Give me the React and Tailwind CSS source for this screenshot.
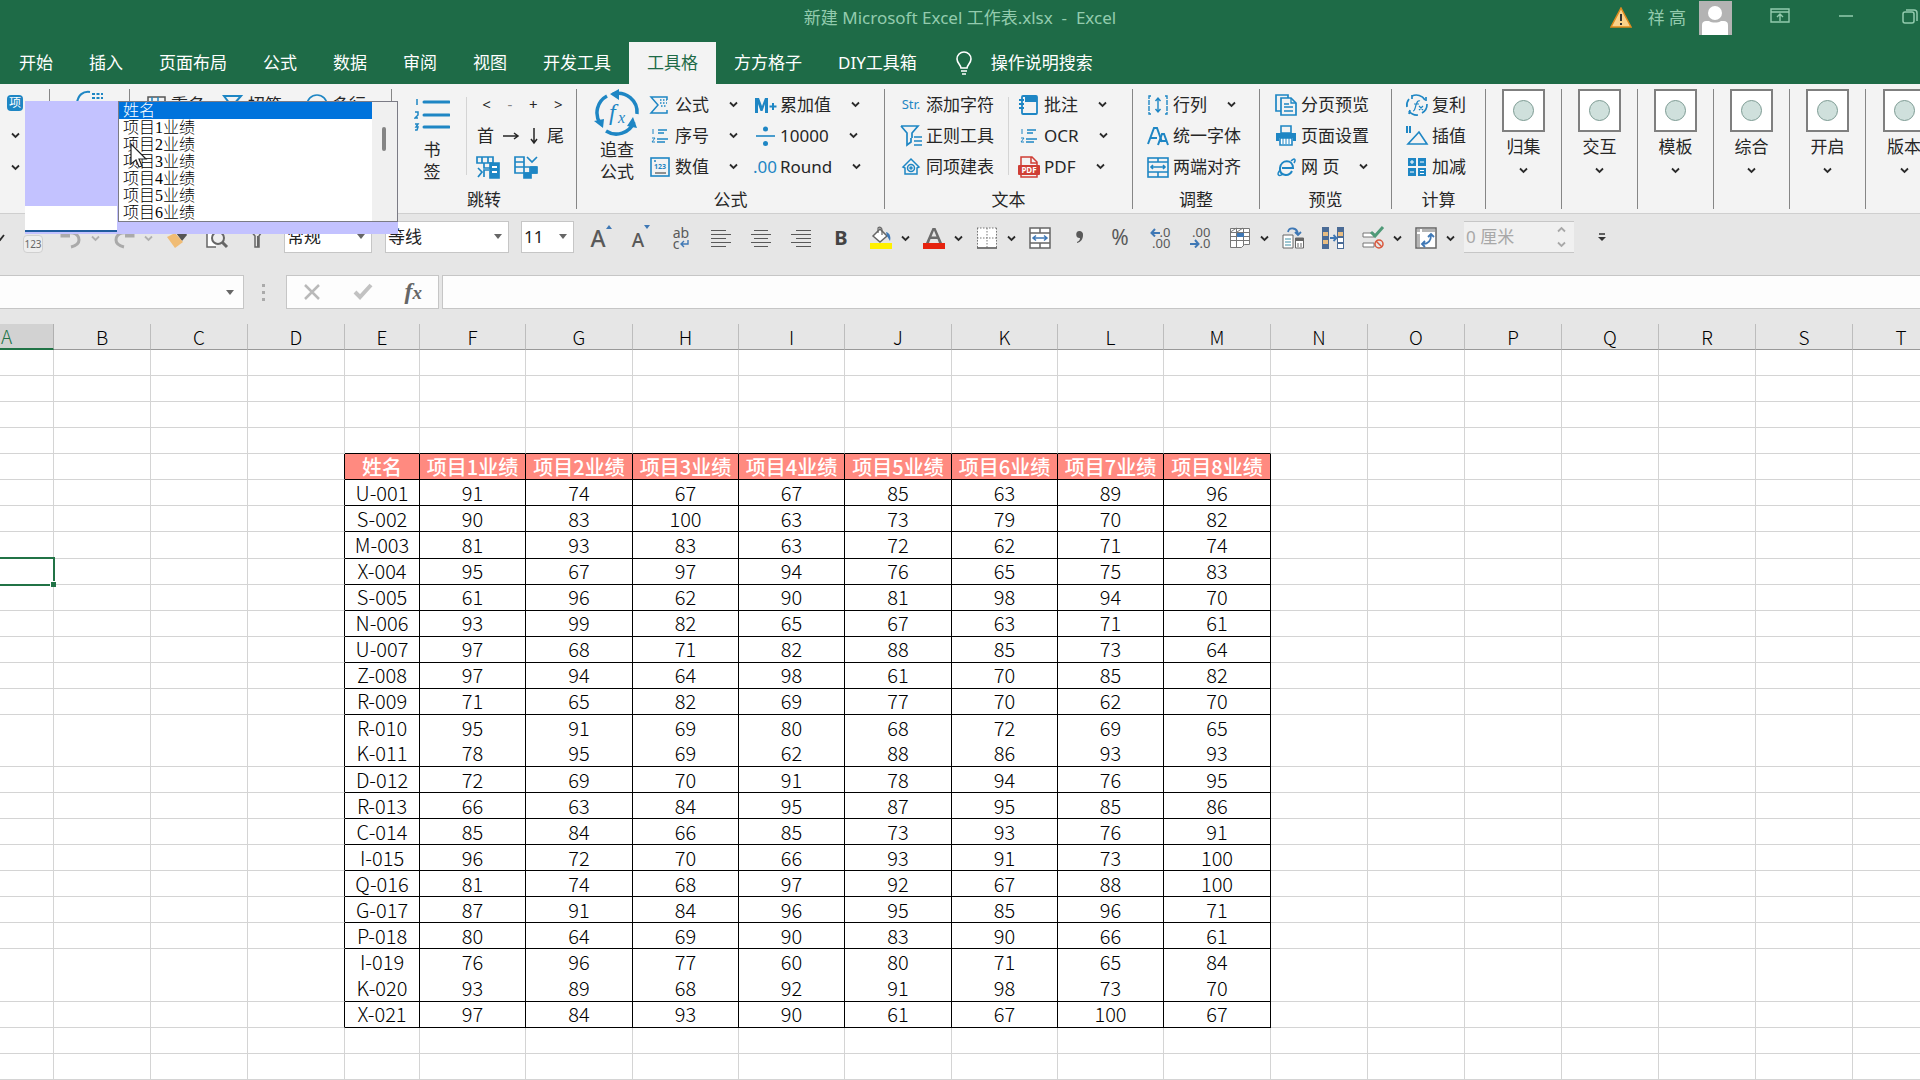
import React from "react";
import { clsx } from "clsx";

const BLUE = "#1e86c4";

const tabs = [
  "开始",
  "插入",
  "页面布局",
  "公式",
  "数据",
  "审阅",
  "视图",
  "开发工具",
  "工具格",
  "方方格子",
  "DIY工具箱",
];

const columns = [
  ["A", 54],
  ["B", 97],
  ["C", 97],
  ["D", 97],
  ["E", 75],
  ["F", 106],
  ["G", 107],
  ["H", 106],
  ["I", 106],
  ["J", 107],
  ["K", 106],
  ["L", 106],
  ["M", 107],
  ["N", 97],
  ["O", 97],
  ["P", 97],
  ["Q", 97],
  ["R", 97],
  ["S", 97],
  ["T", 97],
];

const fields = [
  "姓名",
  "项目1业绩",
  "项目2业绩",
  "项目3业绩",
  "项目4业绩",
  "项目5业绩",
  "项目6业绩",
  "项目7业绩",
  "项目8业绩",
];

const records = [
  ["U-001", 91, 74, 67, 67, 85, 63, 89, 96],
  ["S-002", 90, 83, 100, 63, 73, 79, 70, 82],
  ["M-003", 81, 93, 83, 63, 72, 62, 71, 74],
  ["X-004", 95, 67, 97, 94, 76, 65, 75, 83],
  ["S-005", 61, 96, 62, 90, 81, 98, 94, 70],
  ["N-006", 93, 99, 82, 65, 67, 63, 71, 61],
  ["U-007", 97, 68, 71, 82, 88, 85, 73, 64],
  ["Z-008", 97, 94, 64, 98, 61, 70, 85, 82],
  ["R-009", 71, 65, 82, 69, 77, 70, 62, 70],
  ["R-010", 95, 91, 69, 80, 68, 72, 69, 65],
  ["K-011", 78, 95, 69, 62, 88, 86, 93, 93],
  ["D-012", 72, 69, 70, 91, 78, 94, 76, 95],
  ["R-013", 66, 63, 84, 95, 87, 95, 85, 86],
  ["C-014", 85, 84, 66, 85, 73, 93, 76, 91],
  ["I-015", 96, 72, 70, 66, 93, 91, 73, 100],
  ["Q-016", 81, 74, 68, 97, 92, 67, 88, 100],
  ["G-017", 87, 91, 84, 96, 95, 85, 96, 71],
  ["P-018", 80, 64, 69, 90, 83, 90, 66, 61],
  ["I-019", 76, 96, 77, 60, 80, 71, 65, 84],
  ["K-020", 93, 89, 68, 92, 91, 98, 73, 70],
  ["X-021", 97, 84, 93, 90, 61, 67, 100, 67],
];

const FIRST_ROW = 4;
const FIRST_COL = 4;
const ROW_COUNT = 28;
const SELECTED_ROW = 8;
// rows drawn without a rule underneath
const OPEN_ROWS = [14, 23];

function Svg({ w = 24, h = 24, children, ...props }) {
  return (
    <svg
      width={w}
      height={h}
      viewBox={`0 0 ${w} ${h}`}
      fill="none"
      aria-hidden="true"
      className="shrink-0"
      {...props}
    >
      {children}
    </svg>
  );
}

function Chevron({ color = "#2b2b2b" }) {
  return (
    <Svg w={9} h={7}>
      <path d="M1 1.5l3.5 3.5L8 1.5" stroke={color} strokeWidth="1.8" />
    </Svg>
  );
}

/* ---------- ribbon icons ---------- */

const icons = {
  sigma: (
    <Svg stroke={BLUE} strokeWidth="1.5">
      <path d="M19 7V4H3l7 8-7 8h16v-3" />
      <path d="M12 7h7M12 10h7M13 13h6" strokeDasharray="1.5 1.5" />
    </Svg>
  ),
  list: (
    <Svg stroke={BLUE} strokeWidth="1.6">
      <path d="M10 6h9M10 9h6M9 15h11M9 18h8" />
      <path d="M5 5v5M4 14h3l-3 4h3" strokeWidth="1" />
    </Svg>
  ),
  number: (
    <Svg stroke={BLUE} strokeWidth="1.6">
      <rect x="3" y="3" width="18" height="18" />
      <path d="M6 6h2" />
      <path d="M7 18h11" stroke="#777" />
      <text x="6" y="14" fontSize="7" fontWeight="700" fill={BLUE} stroke="none">
        123
      </text>
    </Svg>
  ),
  mplus: (
    <Svg>
      <path d="M2 20V5h4l3 8 3-8h3v15h-3v-9l-2.500 7h-2L5 11v9z" fill={BLUE} />
      <path d="M16.500 13.500h7M20 10v7" stroke={BLUE} strokeWidth="2" />
    </Svg>
  ),
  divide: (
    <Svg>
      <path d="M3 12h19" stroke={BLUE} strokeWidth="1.600" />
      <circle cx="12.500" cy="5" r="2.500" fill={BLUE} />
      <circle cx="12.500" cy="19.500" r="2.500" fill={BLUE} />
    </Svg>
  ),
  funnel: (
    <Svg stroke={BLUE} strokeWidth="1.7">
      <path d="M2 2h17l-6 7v5M2 2l6 7v12l4-3v-4" />
      <path d="M15 13h8M15 17h8M15 21h8" />
    </Svg>
  ),
  home: (
    <Svg stroke={BLUE} strokeWidth="1.500">
      <path d="M4 12l8-8 8 8-2 1v6H6v-6z" />
      <circle cx="12" cy="13" r="3.500" />
      <circle cx="12" cy="13" r="1" />
    </Svg>
  ),
  note: (
    <Svg>
      <rect x="5" y="3" width="15" height="18" rx="1" stroke={BLUE} strokeWidth="1.800" />
      <path d="M8 3h12v6H8z" fill={BLUE} />
      <path d="M2 7h5M2 11h5M2 15h5" stroke={BLUE} strokeWidth="2" />
    </Svg>
  ),
  pdf: (
    <Svg>
      <path d="M4 11V2h11l5 5v4M4 19v3h16v-3M14 2v6h6" stroke="#cf3e35" strokeWidth="1.500" />
      <rect x="1" y="10" width="22" height="10" rx="1" fill="#cf3e35" />
      <text x="12" y="18" textAnchor="middle" fontSize="8" fontWeight="700" fill="#fff">
        PDF
      </text>
    </Svg>
  ),
  brackets: (
    <Svg stroke={BLUE} strokeWidth="1.400">
      <path d="M5 3H3v18h2M19 3h2v18h-2" strokeDasharray="5 1" />
      <path d="M12 5v14M9.500 8L12 5l2.500 3M9.500 16l2.500 3 2.500-3" />
    </Svg>
  ),
  fonts: (
    <Svg stroke={BLUE} strokeWidth="2">
      <path d="M2 20L8 4h3l5 14M5 14h6" />
      <path d="M12 21l4-11h2l4 11M14 17h6" />
    </Svg>
  ),
  justify: (
    <Svg stroke={BLUE} strokeWidth="1.600">
      <rect x="2" y="3" width="20" height="19" />
      <path d="M2 7h20M2 17h20M12 3v4M12 17v5M5 12h14M7 10l-2 2 2 2M17 10l2 2-2 2" />
    </Svg>
  ),
  pages: (
    <Svg stroke={BLUE} strokeWidth="1.700">
      <path d="M7 18H2V2h12v3" />
      <path d="M7 5h10l5 5v12H7z" />
      <path d="M17 5v5h5M10 11h5M10 14h9M10 18h9" strokeWidth="1.300" />
    </Svg>
  ),
  printer: (
    <Svg>
      <path d="M7 2h10v7H7z" stroke={BLUE} strokeWidth="1.600" />
      <path d="M2 9h20v8h-3v-3H5v3H2z" fill={BLUE} />
      <path d="M6 14h12v7H6z" stroke={BLUE} strokeWidth="1.600" fill="#fff" />
      <path d="M9 14v6M12 14v6M15 14v6" stroke={BLUE} />
    </Svg>
  ),
  web: (
    <Svg stroke={BLUE} strokeWidth="2">
      <path d="M8 13h11c0-9-12-9-13 0-1 8 9 9 12 3" />
      <path d="M17 6c4-4 5-1 3 2M6 15c-4 5-1 7 3 4" strokeWidth="1.500" />
    </Svg>
  ),
  compound: (
    <Svg stroke={BLUE} strokeWidth="1.700">
      <path d="M7 3a10 10 0 0 1 13 4M22 11a10 10 0 0 1-5 9M13 22a10 10 0 0 1-9-4M2 14A10 10 0 0 1 4 6" />
      <path d="M7 2v4M21 4v4M4 21l1-4" />
      <path d="M8 18c2 0 2-3 3-6s2-5 4-4M9 11h5M14 13l4 4M18 13l-4 4" strokeWidth="1.200" />
    </Svg>
  ),
  interpolate: (
    <Svg stroke={BLUE}>
      <path d="M2 2v7M5 2v7" strokeWidth="2" />
      <path d="M3 20h19l-8-12z" strokeWidth="1.600" />
    </Svg>
  ),
  plusminus: (
    <Svg>
      <path d="M3 3h8v8H3zM13 3h8v8h-8zM3 13h8v8H3zM13 13h8v8h-8z" fill={BLUE} />
      <path d="M5 7h4M7 5v4M15 7h4M5 17h4M15 15.500h4M15 18.500h4" stroke="#fff" />
    </Svg>
  ),
};

function TextIcon({ children, thin }) {
  return (
    <span
      aria-hidden="true"
      className={clsx(
        "w-6 shrink-0 text-center text-[#1e86c4]",
        thin ? "text-[13px]" : "text-[17px]",
      )}
    >
      {children}
    </span>
  );
}

function Command({ icon, children, menu }) {
  return (
    <button className="flex h-[31px] items-center gap-[3px] whitespace-nowrap">
      {icon}
      <span>{children}</span>
      {menu && (
        <span className="ml-[17px]">
          <Chevron />
        </span>
      )}
    </button>
  );
}

function Group({ label, className, children }) {
  return (
    <section
      aria-label={label}
      className={clsx(
        "flex h-[120px] shrink-0 flex-col border-r border-[#868686]",
        className,
      )}
    >
      <div className="flex h-[94px]">{children}</div>
      <div className="pt-2 text-center leading-[18px]">{label}</div>
    </section>
  );
}

function ThinRule() {
  return <div className="my-2 w-px bg-[#d4d4d4]" />;
}

function Gallery({ children }) {
  return (
    <button className="flex h-[120px] w-[76px] shrink-0 flex-col items-center border-r border-[#868686] last:border-r-0">
      <span className="flex size-[43px] items-center justify-center border-2 border-[#7f7f7f] bg-white">
        <span className="size-[21px] rounded-full border border-[#7d9b93] bg-[#cfe0dc]" />
      </span>
      <span className="mt-[3px] leading-6">{children}</span>
      <span className="mt-2">
        <Chevron />
      </span>
    </button>
  );
}

function Ribbon() {
  return (
    <div className="flex h-[130px] overflow-hidden border-b border-[#cfcfcf] bg-[#f3f3f3] pt-[5px] text-[17px] text-[#262626]">
      <div className="flex h-[120px] w-[50px] shrink-0 flex-col items-end border-r border-[#868686] pr-[26px]">
        <button className="mt-[6px] h-4 w-4 rounded-sm bg-[#1e86c4] text-[12px] leading-4 text-white">
          项
        </button>
        <span className="mt-[21px] mr-[3px] h-8">
          <Chevron />
        </span>
        <span className="mr-[3px]">
          <Chevron />
        </span>
      </div>
      <div className="flex h-[120px] w-[80px] shrink-0 justify-center border-r border-[#868686]">
        <Svg w={30} h={30} stroke={BLUE} strokeWidth="2">
          <path d="M2 14C3 6 8 2 15 3" />
          <path d="M17 5h11M17 9h11" strokeDasharray="3 1.500" />
        </Svg>
      </div>
      <div className="flex h-[120px] w-[262px] shrink-0 border-r border-[#868686] pl-[14px]">
        <Command
          icon={
            <Svg stroke="#555" strokeWidth="1.500">
              <rect x="4" y="4" width="17" height="17" />
              <path d="M8 4v8l3-3 3 3V4" stroke={BLUE} />
            </Svg>
          }
        >
          重名
        </Command>
        <span className="ml-4">
          <Command
            icon={
              <Svg stroke={BLUE} strokeWidth="2">
                <path d="M3 3h17l-7 8v7H9v-7z" />
              </Svg>
            }
          >
            招符
          </Command>
        </span>
        <span className="ml-[23px]">
          <Command
            icon={
              <Svg stroke={BLUE} strokeWidth="1.600">
                <circle cx="12" cy="12" r="10" />
                <path d="M6 10h12M6 14h12" stroke="#555" />
              </Svg>
            }
          >
            多行
          </Command>
        </span>
      </div>

      <Group label="跳转" className="w-[185px]">
        <button className="flex w-[74px] flex-col items-center pr-[2px] pl-2">
          <Svg w={36} h={42} stroke={BLUE}>
            <path d="M10 13h25M10 26h25M10 38h25" strokeWidth="3" strokeLinecap="round" />
            <path d="M3 10v6M1 23h3v3l-3 3h3M1 35h3l-2 3h2l-1 3H1" strokeWidth="1.500" />
          </Svg>
          <span className="mt-2 w-[17px] leading-[22px]">书签</span>
        </button>
        <ThinRule />
        <div className="grid h-[94px] w-[104px] grid-rows-3 pl-[7px]">
          <div className="flex items-center justify-around text-[15px]">
            <button>&lt;</button>
            <button className="text-[#888]">-</button>
            <button>+</button>
            <button>&gt;</button>
          </div>
          <div className="flex items-center justify-between pl-[3px]">
            <button>首</button>
            <button aria-label="右">
              <Svg w={18} h={18} stroke="#262626" strokeWidth="1.500">
                <path d="M1 9h15M12 6l4 3-4 3" />
              </Svg>
            </button>
            <button aria-label="下">
              <Svg w={10} h={18} stroke="#262626" strokeWidth="1.500">
                <path d="M5 1v15M2 12l3 4 3-4" />
              </Svg>
            </button>
            <button className="pr-[7px]">尾</button>
          </div>
          <div className="flex items-center gap-[14px] pl-[2px]">
            <button aria-label="行跳转">
              <Svg stroke={BLUE} strokeWidth="1.700">
                <path d="M1 2h16v6H1zM6 2v6M12 2v6M8 8v5h6" />
                <path d="M14 8h9v15h-9z" fill={BLUE} />
                <path d="M16 12h5M16 17h5" stroke="#fff" strokeWidth="2" />
                <path d="M2 13l4 4-4 5M8 22v-7h5" />
              </Svg>
            </button>
            <button aria-label="列跳转">
              <Svg stroke={BLUE} strokeWidth="1.700">
                <path d="M1 2h9v16H1zM1 7h9M1 12h21v6H10M16 12v10M13 2l5 5 5-5" />
                <path d="M10 18h7v5h-7zM17 12h6v6h-6z" fill={BLUE} />
              </Svg>
            </button>
          </div>
        </div>
      </Group>

      <Group label="公式" className="w-[308px]">
        <button className="flex w-[71px] shrink-0 flex-col items-center pl-[9px]">
          <Svg w={46} h={48}>
            <g stroke={BLUE} strokeWidth="3.500">
              <path d="M19 5a19 19 0 0 1 24 20" />
              <path d="M40 33a19 19 0 0 1-28 9" />
              <path d="M6 34A19 19 0 0 1 13 7" />
            </g>
            <path d="M25 0l-9 5 9 6zM39 28l-6 9 10 2zM0 32l10-2-1 9z" fill={BLUE} />
            <text
              x="15"
              y="31"
              fontSize="24"
              fontStyle="italic"
              fill={BLUE}
              fontFamily="Liberation Serif, serif"
            >
              f
            </text>
            <text
              x="24"
              y="34"
              fontSize="16"
              fontStyle="italic"
              fill={BLUE}
              fontFamily="Liberation Serif, serif"
            >
              x
            </text>
          </Svg>
          <span className="mt-[2px] w-[34px] leading-[22px]">追查公式</span>
        </button>
        <div className="w-[105px] shrink-0">
          <Command icon={icons.sigma} menu>
            公式
          </Command>
          <Command icon={icons.list} menu>
            序号
          </Command>
          <Command icon={icons.number} menu>
            数值
          </Command>
        </div>
        <div>
          <Command icon={icons.mplus} menu>
            累加值
          </Command>
          <Command icon={icons.divide} menu>
            10000
          </Command>
          <Command icon={<TextIcon>.00</TextIcon>} menu>
            Round
          </Command>
        </div>
      </Group>

      <Group label="文本" className="w-[248px]">
        <div className="w-[123px] pl-[14px]">
          <Command icon={<TextIcon thin>Str.</TextIcon>}>添加字符</Command>
          <Command icon={icons.funnel}>正则工具</Command>
          <Command icon={icons.home}>同项建表</Command>
        </div>
        <ThinRule />
        <div className="pl-2">
          <Command icon={icons.note} menu>
            批注
          </Command>
          <Command icon={icons.list} menu>
            OCR
          </Command>
          <Command icon={icons.pdf} menu>
            PDF
          </Command>
        </div>
      </Group>

      <Group label="调整" className="w-[127px]">
        <div className="pl-[13px]">
          <Command icon={icons.brackets} menu>
            行列
          </Command>
          <Command icon={icons.fonts}>统一字体</Command>
          <Command icon={icons.justify}>两端对齐</Command>
        </div>
      </Group>

      <Group label="预览" className="w-[132px]">
        <div className="pl-[14px]">
          <Command icon={icons.pages}>分页预览</Command>
          <Command icon={icons.printer}>页面设置</Command>
          <Command icon={icons.web} menu>
            网 页
          </Command>
        </div>
      </Group>

      <Group label="计算" className="w-[94px]">
        <div className="pl-[13px]">
          <Command icon={icons.compound}>复利</Command>
          <Command icon={icons.interpolate}>插值</Command>
          <Command icon={icons.plusminus}>加减</Command>
        </div>
      </Group>

      <Gallery>归集</Gallery>
      <Gallery>交互</Gallery>
      <Gallery>模板</Gallery>
      <Gallery>综合</Gallery>
      <Gallery>开启</Gallery>
      <Gallery>版本</Gallery>
    </div>
  );
}

/* ---------- quick access toolbar ---------- */

function Tool({ label, menu, faded, children }) {
  return (
    <button
      aria-label={label}
      className={clsx(
        "flex h-[34px] shrink-0 items-center",
        menu ? "w-[53px]" : "w-10",
      )}
    >
      <span className="flex w-10 shrink-0 justify-center">{children}</span>
      {menu && <Chevron color={faded ? "#b0b0b0" : "#2b2b2b"} />}
    </button>
  );
}

function Picker({ label, value, options = [], className }) {
  return (
    <span
      className={clsx(
        "relative h-8 shrink-0 border border-[#c6c6c6] bg-white",
        className,
      )}
    >
      <select
        aria-label={label}
        defaultValue={value}
        className="h-full w-full appearance-none bg-transparent pl-[2px] text-[17px] leading-[28px] text-[#222]"
      >
        <option>{value}</option>
        {options.map((option) => (
          <option key={option}>{option}</option>
        ))}
      </select>
      <span className="pointer-events-none absolute top-3 right-[6px] border-x-[4px] border-t-[5px] border-x-transparent border-t-[#666]" />
    </span>
  );
}

function AlignLines({ d }) {
  return (
    <Svg w={20} h={20} stroke="#595959" strokeWidth="1.200">
      <path d={d} />
    </Svg>
  );
}

function QuickAccess() {
  return (
    <div className="flex h-[61px] items-start overflow-hidden bg-[#e6e6e6] pt-[7px]">
      <span className="flex h-[34px] w-[11px] shrink-0 items-center">
        <Svg w={9} h={9}>
          <path d="M-2 5l2 1 4-5" stroke="#2b2b2b" strokeWidth="1.800" />
        </Svg>
      </span>
      <Tool label="编号">
        <span className="mt-3 ml-1 rounded border border-[#d0d0d0] bg-[#eee] text-[10px] leading-4 text-[#666]">
          123
        </span>
      </Tool>
      <Tool label="撤消" menu faded>
        <Svg w={22} h={22} stroke="#aaa" strokeWidth="3">
          <path d="M2 2v7h8M3 9c6-6 16-3 16 4 0 4-4 6-8 7" />
        </Svg>
      </Tool>
      <Tool label="恢复" menu faded>
        <Svg w={22} h={22} stroke="#aaa" strokeWidth="3">
          <path d="M20 2v7h-8M19 9C13 3 3 6 3 13c0 4 4 6 8 7" />
        </Svg>
      </Tool>
      <Tool label="格式刷">
        <Svg w={22} h={22}>
          <path d="M10 6l7-5 4 7-5 6z" fill="#555" />
          <path d="M1 10l8-4 8 9-8 6z" fill="#f0bc75" />
        </Svg>
      </Tool>
      <Tool label="打印预览">
        <Svg w={24} h={24} stroke="#666" strokeWidth="1.500">
          <path d="M11 21H2V3h12" fill="#fff" />
          <circle cx="13" cy="12" r="6" strokeWidth="2" fill="#eee" />
          <path d="M17 16l5 5" strokeWidth="3" />
        </Svg>
      </Tool>
      <Tool label="筛选">
        <Svg w={16} h={22}>
          <path d="M1 3h13l-4 6v11H6V9z" stroke="#666" strokeWidth="1.500" />
          <path d="M8 9h2v11H8z" fill="#666" />
        </Svg>
      </Tool>
      <Picker
        label="数字格式"
        value="常规"
        options={["数值", "文本"]}
        className="ml-[7px] w-[88px]"
      />
      <Picker label="字体" value="等线" className="ml-[13px] w-[124px]" />
      <Picker label="字号" value="11" className="ml-3 w-[53px]" />
      <div className="ml-[7px] flex text-[#595959]">
        <Tool label="增大字号">
          <span className="text-[23px] leading-7 font-medium">A</span>
          <Svg w={6} h={22}>
            <path d="M0 5l3-4 3 4z" fill="#3f78b5" />
          </Svg>
        </Tool>
        <Tool label="减小字号">
          <span className="pt-1 text-[19px] leading-6 font-medium">A</span>
          <Svg w={6} h={22}>
            <path d="M0 1h6L3 5z" fill="#3f78b5" />
          </Svg>
        </Tool>
        <Tool label="自动换行">
          <span className="flex flex-col text-left text-[14px] leading-[11px]">
            <span>ab</span>
            <span className="flex items-center">
              c
              <Svg w={9} h={9} stroke="#3f78b5" strokeWidth="1.400">
                <path d="M8 1v4H1M4 2L1 5l3 3" />
              </Svg>
            </span>
          </span>
        </Tool>
        <Tool label="左对齐">
          <AlignLines d="M0 2.500h15M0 6.500h20M0 10.500h15M0 14.500h20M0 18.500h15" />
        </Tool>
        <Tool label="居中">
          <AlignLines d="M3 2.500h14M0 6.500h20M3 10.500h14M0 14.500h20M3 18.500h14" />
        </Tool>
        <Tool label="右对齐">
          <AlignLines d="M5 2.500h15M0 6.500h20M5 10.500h15M0 14.500h20M5 18.500h15" />
        </Tool>
        <Tool label="加粗">
          <span className="text-[20px] font-bold text-[#444]">B</span>
        </Tool>
        <Tool label="填充颜色" menu>
          <Svg>
            <path d="M4 10l7-7 7 7-7 6z" fill="#fff" stroke="#666" strokeWidth="1.500" />
            <path d="M9 7V2c2-2 4 0 4 2v5" stroke="#666" strokeWidth="1.200" />
            <path d="M17 6c4 1 5 5 4 9l-3-5z" fill="#3f78b5" />
            <path d="M1 17h22v6H1z" fill="#fff000" />
          </Svg>
        </Tool>
        <Tool label="字体颜色" menu>
          <Svg>
            <path d="M4 17L10.500 2h3L20 17h-3l-1.500-4h-7L7 17zM9.500 10.500h5L12 4.500z" fill="#6b6b6b" />
            <path d="M1 17h22v6H1z" fill="#e6230f" />
          </Svg>
        </Tool>
        <Tool label="边框" menu>
          <Svg w={20} h={22}>
            <path d="M1 1h18v19H1z" fill="#fff" />
            <path d="M.5 1v20M10 1v20M19.500 1v20M0 1h20M0 11h20" stroke="#777" strokeDasharray="1.500 1.500" />
            <path d="M0 21h20" stroke="#555" strokeWidth="1.500" />
          </Svg>
        </Tool>
        <Tool label="合并居中">
          <Svg w={22} h={22}>
            <path d="M1 1h20v20H1zM1 6h20M1 16h20M11 1v5M11 16v5" fill="#fff" stroke="#666" strokeWidth="1.500" />
            <path d="M4 11h14M7 8.500L4 11l3 2.500M15 8.500l3 2.500-3 2.500" stroke="#3f78b5" strokeWidth="1.500" />
          </Svg>
        </Tool>
        <Tool label="千位分隔">
          <Svg w={10} h={16}>
            <path d="M4.500 1a3.500 3.500 0 0 1 3.500 4c0 4-2 7-6 8l0-1c2-1 3-2 3-4A3.500 3.500 0 0 1 4.500 1z" fill="#595959" />
          </Svg>
        </Tool>
        <Tool label="百分比">
          <span className="text-[21px]">%</span>
        </Tool>
        <Tool label="增加小数位">
          <span className="flex flex-col items-end text-[13px] leading-[11px]">
            <span className="flex items-center">
              <Svg w={10} h={9} stroke="#3f78b5" strokeWidth="2">
                <path d="M10 5H2M5 1L1.500 5 5 8.500" />
              </Svg>
              .0
            </span>
            <span>.00</span>
          </span>
        </Tool>
        <Tool label="减少小数位">
          <span className="flex flex-col items-end text-[13px] leading-[11px]">
            <span>.00</span>
            <span className="flex items-center">
              <Svg w={10} h={9} stroke="#3f78b5" strokeWidth="2">
                <path d="M0 5h8M5 1l3.500 4L5 8.500" />
              </Svg>
              .0
            </span>
          </span>
        </Tool>
        <Tool label="套用格式" menu>
          <Svg w={20} h={22} stroke="#777">
            <path d="M.5 1.500h19v16h-5l-3 3H.5z" fill="#fff" />
            <path d="M.5 5.500h19M.5 9.500h19M.5 13.500h19M6.500 1v19M13.500 1v17M.5 5l6-4M7 5l6-4" />
            <path d="M7 6h7v4H7z" fill="#3f78b5" stroke="none" />
          </Svg>
        </Tool>
        <Tool label="粘贴链接">
          <Svg>
            <path d="M2 9h10v13H2z" fill="#fff" stroke="#666" />
            <path d="M4 13h6M4 16h6M4 19h6" stroke="#3f8fa5" />
            <path d="M14.500 12h8v10h-8z" fill="#fff" stroke="#666" />
            <path d="M14 12h9v3h-9z" fill="#666" />
            <path d="M16 18h5M16 20h5" stroke="#666" strokeDasharray="2 1" />
            <path d="M7 6c1-5 9-5 10 2M14 6l3 3 3-3" stroke="#3f78b5" strokeWidth="1.800" />
          </Svg>
        </Tool>
        <Tool label="分列">
          <Svg>
            <path d="M1 1h7v22H1zM16 1h7v22h-7z" fill="#4a6b96" />
            <path d="M2 6h5v4H2zM2 14h5v4H2zM17 6h5v4h-5z" fill="#e8bd82" />
            <path d="M17 12h5v4h-5zM17 18h5v4h-5z" fill="#fff" />
            <path d="M9 12h6M12.500 9l3 3-3 3" stroke="#3f78b5" strokeWidth="1.800" />
          </Svg>
        </Tool>
        <Tool label="数据验证" menu>
          <Svg>
            <path d="M2 7h11v4H2zM2 17h11v4H2z" fill="#fff" stroke="#777" />
            <path d="M10 6l4 4 8-9" stroke="#4f9a78" strokeWidth="3" />
            <circle cx="18" cy="18" r="4" stroke="#d9573c" strokeWidth="1.500" />
            <path d="M15 15l6 6" stroke="#d9573c" strokeWidth="1.500" />
          </Svg>
        </Tool>
        <Tool label="转置" menu>
          <Svg w={22} h={22}>
            <path d="M1 1h20v20H1z" fill="#fff" stroke="#666" strokeWidth="1.500" />
            <path d="M7 2h13v3H7zM2 7h3v13H2zM2 2h3v3H2z" fill="#b5b5b5" />
            <path d="M8 17c5 0 8-3 8-9M13 10l3-3 3 3M10 14l-3 3 3 3" stroke="#3f78b5" strokeWidth="1.800" />
          </Svg>
        </Tool>
      </div>
      <div className="ml-[5px] flex h-8 w-[110px] shrink-0 items-center border-y border-[#c6c6c6] bg-[#f0f0f0] pr-2">
        <input
          aria-label="高度"
          disabled
          defaultValue="0 厘米"
          className="w-full min-w-0 bg-transparent pl-[2px] text-[17px] text-[#a8a8a8]"
        />
        <span className="flex flex-col gap-2">
          <span className="rotate-180">
            <Chevron color="#a8a8a8" />
          </span>
          <Chevron color="#a8a8a8" />
        </span>
      </div>
      <button aria-label="自定义快速访问工具栏" className="ml-6 h-8">
        <Svg w={8} h={9}>
          <path d="M1 1h6" stroke="#333" strokeWidth="1.500" />
          <path d="M0 4h8L4 8z" fill="#333" />
        </Svg>
      </button>
    </div>
  );
}

function FormulaBar() {
  return (
    <div className="flex h-[49px] items-start bg-[#e6e6e6]">
      <div className="flex h-[34px] w-[244px] shrink-0 items-center border border-l-0 border-[#c6c6c6] bg-[#fdfdfd] pr-[9px]">
        <input aria-label="名称框" className="h-full min-w-0 flex-1 bg-transparent" />
        <span className="border-x-[4px] border-t-[5px] border-x-transparent border-t-[#666]" />
      </div>
      <div className="flex h-[34px] w-[42px] shrink-0 flex-col items-center justify-center gap-1 pr-1">
        <span className="size-[3px] bg-[#aaa]" />
        <span className="size-[3px] bg-[#aaa]" />
        <span className="size-[3px] bg-[#aaa]" />
      </div>
      <div className="flex h-[34px] w-[153px] shrink-0 items-center justify-around border border-[#c6c6c6] bg-[#fdfdfd]">
        <button aria-label="取消">
          <Svg w={18} h={18} stroke="#b9b9b9" strokeWidth="2.500">
            <path d="M2 2l14 14M16 2L2 16" />
          </Svg>
        </button>
        <button aria-label="输入">
          <Svg w={20} h={18} stroke="#c2c2c2" strokeWidth="4">
            <path d="M2 9l5 5L18 2" />
          </Svg>
        </button>
        <button
          aria-label="插入函数"
          className="font-['Liberation_Serif',serif] text-[24px] leading-7 font-bold text-[#666] italic"
        >
          f<span className="text-[19px]">x</span>
        </button>
      </div>
      <input
        aria-label="编辑栏"
        className="ml-[3px] h-[34px] min-w-0 flex-1 border border-r-0 border-[#c6c6c6] bg-[#fdfdfd]"
      />
    </div>
  );
}

function cellContent(row, col) {
  if (row === FIRST_ROW) return fields[col - FIRST_COL];
  return records[row - FIRST_ROW - 1]?.[col - FIRST_COL];
}

function Sheet() {
  const lastRow = FIRST_ROW + records.length;
  const lastCol = FIRST_COL + fields.length - 1;

  return (
    <div className="min-h-0 flex-1 overflow-hidden bg-white">
      <table className="h-full w-full table-fixed border-separate border-spacing-0 font-['Noto_Sans_CJK_SC',sans-serif] text-[20px]">
        <colgroup>
          {columns.map(([name, width]) => (
            <col key={name} style={{ width }} />
          ))}
        </colgroup>
        <thead>
          <tr className="h-[26px]">
            {columns.map(([name]) => (
              <th
                key={name}
                scope="col"
                className={clsx(
                  "border-r p-0 text-[19px] leading-[22px] font-light",
                  name === "A"
                    ? "border-b-2 border-r-[#b0b0b0] border-b-[#217346] bg-[#d2d2d2] pl-px text-left text-[#217346]"
                    : "border-b border-r-[#bdbdbd] border-b-[#999] bg-[#e6e6e6] text-black",
                )}
              >
                {name}
              </th>
            ))}
          </tr>
        </thead>
        <tbody>
          {Array.from({ length: ROW_COUNT }, (_, row) => (
            <tr key={row} className="h-[26px]">
              {columns.map(([name], col) => {
                const inRows = row >= FIRST_ROW && row <= lastRow;
                const inCols = col >= FIRST_COL && col <= lastCol;
                const blackRight = inRows && col >= FIRST_COL - 1 && col <= lastCol;
                const blackBottom = inCols && row >= FIRST_ROW - 1 && row <= lastRow;
                const open = OPEN_ROWS.includes(row);
                return (
                  <td
                    key={name}
                    className={clsx(
                      "border-r p-0 text-center leading-[24px] whitespace-nowrap",
                      !open && "border-b",
                      blackRight ? "border-r-black" : "border-r-[#d4d4d4]",
                      blackBottom ? "border-b-black" : "border-b-[#d4d4d4]",
                      inCols && row === FIRST_ROW
                        ? "bg-[#ff8a80] font-medium text-white"
                        : "font-light text-black",
                      col === 0 && row === SELECTED_ROW && "relative",
                    )}
                  >
                    {inRows && inCols && cellContent(row, col)}
                    {col === 0 && row === SELECTED_ROW && (
                      <span className="absolute -inset-y-[2px] -right-[2px] left-0 border-y-2 border-r-2 border-[#217346]">
                        <span className="absolute -right-[3px] -bottom-[3px] size-[6px] border-t border-l border-white bg-[#217346]" />
                      </span>
                    )}
                  </td>
                );
              })}
            </tr>
          ))}
        </tbody>
      </table>
    </div>
  );
}

function FieldPopup() {
  return (
    <div className="absolute top-[101px] left-[25px] flex h-[133px] w-[373px] bg-[#c3c2ff]">
      <div className="flex w-[92px] flex-col justify-end pb-[2px]">
        <input
          aria-label="字段"
          className="h-[26px] w-full border-b-2 border-[#1f5c9e] bg-white"
        />
      </div>
      <div className="ml-px flex h-[121px] w-[280px] border border-[#7b7b85] bg-white">
        <ul
          role="listbox"
          aria-label="字段列表"
          className="flex-1 font-['Liberation_Serif','Noto_Sans_CJK_SC',serif] text-[16px] leading-[17px] font-light text-black"
        >
          {fields.slice(0, 7).map((field, index) => (
            <li
              key={field}
              role="option"
              aria-selected={index === 0}
              className={clsx(
                "h-[17px] pl-1",
                index === 0 && "bg-[#0073dc] text-white",
              )}
            >
              {field}
            </li>
          ))}
        </ul>
        <div className="w-[25px] bg-[#f0f0f0] pt-[25px] pl-[10px]">
          <div className="h-6 w-1 rounded-full bg-[#858585]" />
        </div>
      </div>
      <svg
        width="18"
        height="26"
        viewBox="0 0 18 26"
        aria-hidden="true"
        className="absolute top-[42px] left-[105px]"
      >
        <path
          d="M1 1v20l5-4 3 7 3-1-3-7h7z"
          fill="#fff"
          stroke="#222"
          strokeWidth="1.200"
        />
      </svg>
    </div>
  );
}

function TitleBar() {
  return (
    <header className="grid h-[42px] grid-cols-[1fr_auto_1fr] items-start bg-[#1e6b47] text-[#93cbae]">
      <span />
      <h1 className="text-[17px] leading-[36px] whitespace-pre">
        新建 Microsoft Excel 工作表.xlsx  -  Excel
      </h1>
      <div className="flex h-9 items-center justify-end pr-px">
        <Svg w={22} h={22}>
          <path d="M11 1l10 19H1z" fill="#fbd28a" stroke="#e08a1e" strokeWidth="1.500" />
          <path d="M11 7v7M11 16v2" stroke="#333" strokeWidth="2" />
        </Svg>
        <span className="ml-4 text-[17px]">祥 高</span>
        <Svg w={33} h={34} className="ml-[13px] shrink-0 bg-[#b3b3b3]">
          <circle cx="16" cy="12" r="7" fill="#fff" />
          <path d="M3 34V24c0-3 2-4 4-4h3c3 2 9 2 12 0h3c2 0 4 1 4 4v10z" fill="#fff" />
        </Svg>
        <div className="ml-[38px] flex items-center gap-12 pb-1">
          <button aria-label="功能区显示选项">
            <Svg w={20} h={16} stroke="#93cbae" strokeWidth="1.400">
              <path d="M1 1h18v13H1zM1 4h18M10 13V6M7 9l3-3 3 3" />
            </Svg>
          </button>
          <button aria-label="最小化">
            <Svg w={16} h={16} stroke="#93cbae" strokeWidth="1.500">
              <path d="M1 8h14" />
            </Svg>
          </button>
          <button aria-label="向下还原">
            <Svg w={17} h={16} stroke="#93cbae" strokeWidth="1.500">
              <rect x="1" y="4" width="11" height="11" rx="2" />
              <path d="M4 2h8a3 3 0 0 1 3 3v8" />
            </Svg>
          </button>
        </div>
      </div>
    </header>
  );
}

function TabBar() {
  return (
    <nav className="flex h-[42px] bg-[#1e6b47] pl-px text-[17px] leading-[42px] text-white">
      {tabs.map((tab) => (
        <button
          key={tab}
          className={clsx(
            "shrink-0 px-[18px]",
            tab === "工具格" && "bg-[#f3f3f3] text-[#1e6b47]",
          )}
        >
          {tab}
        </button>
      ))}
      <button className="ml-5 flex shrink-0 items-center gap-[18px]">
        <Svg w={18} h={24} stroke="#fff" strokeWidth="1.600">
          <path d="M6 17c0-3-4-5-4-9a7 7 0 0 1 14 0c0 4-4 6-4 9zM6 20h6M7 23h4" />
        </Svg>
        操作说明搜索
      </button>
    </nav>
  );
}

export default function App() {
  return (
    <div className="relative flex h-screen flex-col overflow-hidden bg-[#e6e6e6] font-['Noto_Sans','Noto_Sans_CJK_SC',sans-serif]">
      <TitleBar />
      <TabBar />
      <Ribbon />
      <QuickAccess />
      <FormulaBar />
      <Sheet />
      <FieldPopup />
    </div>
  );
}
